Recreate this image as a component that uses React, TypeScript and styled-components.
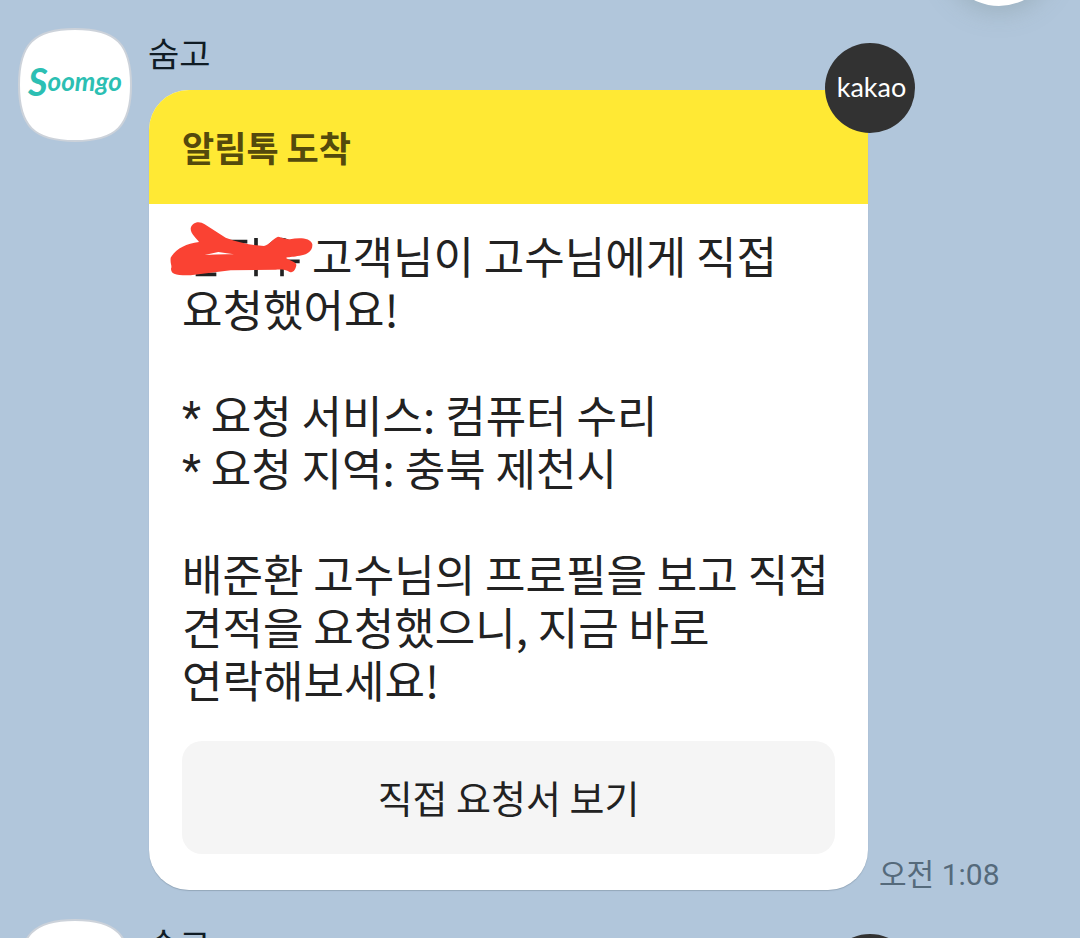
import styled, { createGlobalStyle } from "styled-components";

const Global = createGlobalStyle`
  * { box-sizing: border-box; }
  html, body { margin: 0; background: #b1c6db; }
  body { font-family: "Noto Sans CJK KR", sans-serif; color: #222; }
`;

const Room = styled.main`
  position: relative;
  height: 100vh;
  overflow: hidden;
  padding: 28px 18px;
  display: flex;
  flex-direction: column;
  gap: 29px;
  background: #b1c6db;
`;

const FloatingButton = styled.button`
  position: absolute;
  top: -104px;
  right: 26px;
  width: 110px;
  height: 110px;
  border: 0;
  border-radius: 50%;
  background: #fff;
  box-shadow: 0 6px 24px rgba(120, 140, 140, 0.35);
`;

const Message = styled.article`
  flex: none;
  display: flex;
  align-items: flex-start;
  gap: 16px;
`;

const Avatar = styled.svg`
  flex: none;
  width: 114px;
  height: 114px;
`;

const Content = styled.div`
  flex: 1;
  min-width: 0;
`;

const Sender = styled.h2`
  margin: 0;
  height: 62px;
  font-size: 34px;
  line-height: 50px;
  font-weight: 400;
  color: #101c25;
`;

const BubbleRow = styled.div`
  display: flex;
  align-items: flex-end;
  gap: 11px;
  padding-left: 1px;
`;

const Bubble = styled.section`
  position: relative;
  flex: 0 1 719px;
  border-radius: 40px;
  background: #fff;
  box-shadow: 0 1px 1px rgba(80, 95, 110, 0.3);
`;

const BubbleHeader = styled.header`
  padding: 31px 33px;
  border-radius: 40px 40px 0 0;
  background: #ffe934;
  color: #544a0c;
`;

const BubbleTitle = styled.h3`
  margin: 0;
  font-size: 35px;
  line-height: 52px;
  font-weight: 700;
`;

const KakaoBadge = styled.span`
  position: absolute;
  top: -47px;
  right: -47px;
  width: 90px;
  height: 90px;
  display: flex;
  align-items: center;
  justify-content: center;
  padding: 0 0 3px 3px;
  border-radius: 50%;
  background: #323232;
  color: #fff;
  font-family: Lato, sans-serif;
  font-size: 27px;
`;

const BubbleBody = styled.div`
  padding: 25px 33px 36px;
`;

const Paragraph = styled.p`
  margin: 0 0 53px;
  font-size: 44px;
  line-height: 53px;
  white-space: nowrap;
  &:last-of-type { margin-bottom: 35px; }
`;

const Bullet = styled.span`
  font-family: Roboto, sans-serif;
  line-height: 1;
`;

const Scribble = styled.svg`
  width: 130px;
  height: 53px;
  vertical-align: top;
  overflow: visible;
`;

const ActionButton = styled.button`
  display: block;
  width: 100%;
  height: 113px;
  border: 0;
  border-radius: 20px;
  padding: 0 0 2px;
  background: #f5f5f5;
  color: #222;
  font-family: inherit;
  font-size: 38px;
`;

const Time = styled.time`
  font-family: Roboto, "Noto Sans CJK KR", sans-serif;
  font-size: 30px;
  line-height: 30px;
  white-space: nowrap;
  color: #556a7b;
`;

function SoomgoAvatar() {
  return (
    <Avatar viewBox="0 0 114 114" role="img" aria-label="Soomgo">
      <path
        d="M57 1C98 1 113 16 113 57S98 113 57 113 1 98 1 57 16 1 57 1Z"
        fill="#fff"
        stroke="#ccd2da"
        strokeWidth="2"
      />
      <text x="10" y="68" fill="#2cbfb3" fontFamily="Lato, sans-serif" fontStyle="italic" fontWeight="700" fontSize="38">
        S<tspan dy="-5" fontSize="26">oomgo</tspan>
      </text>
    </Avatar>
  );
}

function MaskedName() {
  return (
    <Scribble viewBox="54 39 390 159" aria-hidden="true">
      <path
        d="M110 77H250M276 66V181M95 175H157M318 88Q345 62 372 76M354 155V181M365 136H407"
        fill="none"
        stroke="#222"
        strokeWidth="11"
      />
      <path
        fillRule="evenodd"
        d="M80 38C82 20 105 12 122 25L185 65C225 80 265 88 300 90C318 84 325 70 342 62C355 64 362 70 378 70C405 64 440 65 445 85C447 108 425 118 400 120C385 124 372 122 366 126C380 135 398 138 397 148C395 160 388 172 377 168C365 160 350 160 335 161L200 163L80 178C45 178 20 178 21 158C25 148 18 145 20 125C35 100 65 82 105 78C100 68 80 55 80 38ZM122 117Q142 113 163 108Q190 112 210 115Q165 114 122 117Z"
        fill="#fa4233"
      />
    </Scribble>
  );
}

function AlimtalkMessage() {
  return (
    <Message>
      <SoomgoAvatar />
      <Content>
        <Sender>숨고</Sender>
        <BubbleRow>
          <Bubble>
            <BubbleHeader>
              <BubbleTitle>알림톡 도착</BubbleTitle>
            </BubbleHeader>
            <KakaoBadge>kakao</KakaoBadge>
            <BubbleBody>
              <Paragraph>
                <MaskedName />고객님이 고수님에게 직접<br />
                요청했어요!
              </Paragraph>
              <Paragraph>
                <Bullet>*</Bullet> 요청 서비스: 컴퓨터 수리<br />
                <Bullet>*</Bullet> 요청 지역: 충북 제천시
              </Paragraph>
              <Paragraph>
                배준환 고수님의 프로필을 보고 직접<br />
                견적을 요청했으니, 지금 바로<br />
                연락해보세요!
              </Paragraph>
              <ActionButton type="button">직접 요청서 보기</ActionButton>
            </BubbleBody>
          </Bubble>
          <Time dateTime="01:08">오전 1:08</Time>
        </BubbleRow>
      </Content>
    </Message>
  );
}

export default function App() {
  return (
    <>
      <Global />
      <Room>
        <AlimtalkMessage />
        <AlimtalkMessage />
        <FloatingButton type="button" aria-label="메뉴" />
      </Room>
    </>
  );
}
